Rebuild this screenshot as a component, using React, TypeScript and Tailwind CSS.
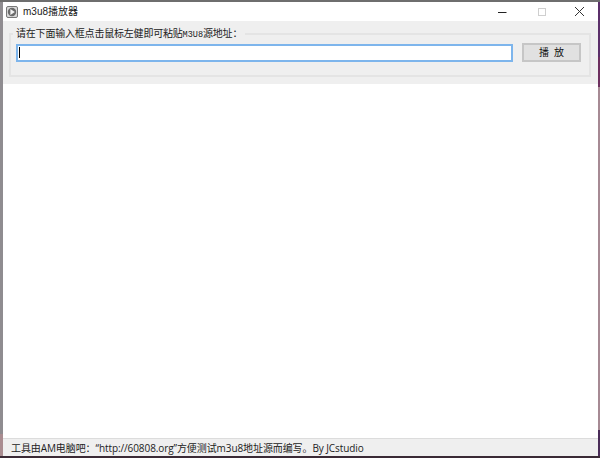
import React from "react";

const cjk = "font-['Liberation_Sans','Noto_Sans_CJK_SC',sans-serif]";

const App = () => {
  return (
    <div className={`w-[600px] h-[458px] overflow-hidden bg-[#3a2a35] ${cjk}`}>
      <div className="h-[2px] bg-[#6e6e6e]" />
      <div className="flex h-[454px]">
        <div className="w-[3px] flex flex-col">
          <div className="flex-1 bg-[#8f8c90]" />
          <div className="h-[22px] bg-[#a98c90]" />
        </div>
        <div className="w-[595px] flex flex-col bg-white">
          {/* title bar */}
          <div className="h-[19px] flex items-center pl-[3px] bg-white shrink-0">
            <svg width="12" height="12" viewBox="0 0 12 12" className="shrink-0">
              <rect x="0.5" y="0.5" width="11" height="11" rx="1.5" fill="#d8d8d8" stroke="#777" />
              <circle cx="6" cy="6" r="4.2" fill="#6a6a6a" />
              <path d="M4.4 3 L8.9 6 L4.4 9 Z" fill="#f2f2f2" />
            </svg>
            <span className="ml-[5px] text-[10px] leading-none text-[#222]">m3u8播放器</span>
            <div className="ml-auto flex items-center">
              <svg width="10" height="10" viewBox="0 0 10 10" className="mr-[30px]">
                <path d="M1 5.5 H9.5" stroke="#222" strokeWidth="1" />
              </svg>
              <svg width="10" height="10" viewBox="0 0 10 10" className="mr-[27px]">
                <rect x="1.5" y="1.5" width="7" height="7" fill="none" stroke="#cfcfcf" />
              </svg>
              <svg width="11" height="11" viewBox="0 0 11 11" className="mr-[13px]">
                <path d="M1 1 L10 10 M10 1 L1 10" stroke="#333" strokeWidth="1" />
              </svg>
            </div>
          </div>

          {/* address panel */}
          <div className="h-[63px] bg-[#efefef] pt-[5px] pl-[6px] pr-[7px] shrink-0">
            <fieldset className="h-[51px] border-2 border-[#e4e4e4] pt-[2px] pl-[5px] pr-[8px]">
              <legend className="-ml-[3px] px-[3px] text-[10px] leading-[15px] tracking-[-0.2px] text-[#222] whitespace-nowrap">
                请在下面输入框点击鼠标左健即可粘贴<span className="font-['Liberation_Mono',monospace] text-[8.5px] leading-none tracking-normal">M3U8</span>源地址：
              </legend>
              <div className="flex items-center gap-[9px]">
                <div className="w-[497px] h-[18px] bg-white border-2 border-[#7db5ec] flex items-center pl-[1px]">
                  <div className="w-px h-[11px] bg-black" />
                </div>
                <button className="w-[59px] h-[19px] bg-[#e1e1e1] border-2 border-[#c6c6c6] text-[10px] leading-none text-[#111] tracking-[5px] pl-[5px]">
                  播放
                </button>
              </div>
            </fieldset>
          </div>

          {/* player area */}
          <div className="flex-1 bg-white" />

          {/* status bar */}
          <div className="h-[18px] border-t border-[#dcdcdc] bg-[#efefef] flex items-center pl-[8px] shrink-0">
            <span className="font-['Open_Sans','Noto_Sans_CJK_SC',sans-serif] text-[10px] leading-none tracking-[-0.09px] text-[#222] whitespace-nowrap">
              工具由AM电脑吧：“http://60808.org”方便测试m3u8地址源而编写。By JCstudio
            </span>
          </div>
        </div>
        <div className="w-[2px] flex flex-col">
          <div className="h-[55px] bg-[#5b2f6a]" />
          <div className="h-[30px] bg-[#6d2f5f]" />
          <div className="flex-1 bg-[#a68a94]" />
          <div className="h-[26px] bg-[#4a2c58]" />
        </div>
      </div>
      <div className="h-[2px] bg-[#3a2a35]" />
    </div>
  );
};

export default App;
